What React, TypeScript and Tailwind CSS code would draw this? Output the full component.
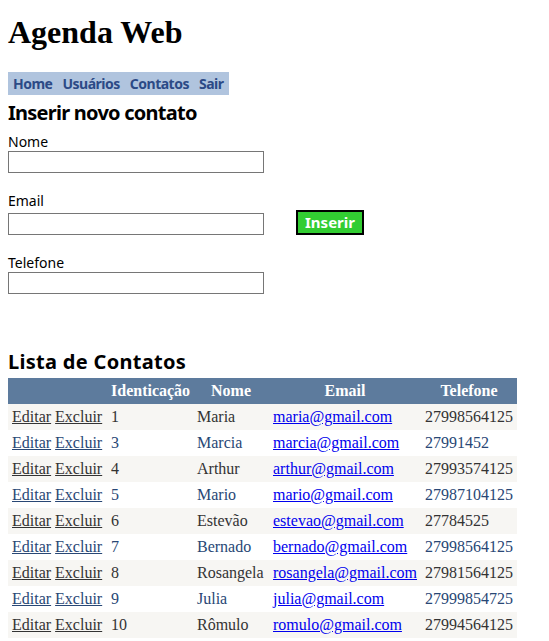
import React from 'react';

type Contato = { id: number; nome: string; email: string; telefone: string };

const contatos: Contato[] = [
  { id: 1, nome: "Maria", email: "maria@gmail.com", telefone: "27998564125" },
  { id: 3, nome: "Marcia", email: "marcia@gmail.com", telefone: "27991452" },
  { id: 4, nome: "Arthur", email: "arthur@gmail.com", telefone: "27993574125" },
  { id: 5, nome: "Mario", email: "mario@gmail.com", telefone: "27987104125" },
  { id: 6, nome: "Estevão", email: "estevao@gmail.com", telefone: "27784525" },
  { id: 7, nome: "Bernado", email: "bernado@gmail.com", telefone: "27998564125" },
  { id: 8, nome: "Rosangela", email: "rosangela@gmail.com", telefone: "27981564125" },
  { id: 9, nome: "Julia", email: "julia@gmail.com", telefone: "27999854725" },
  { id: 10, nome: "Rômulo", email: "romulo@gmail.com", telefone: "27994564125" },
];

const sans = "font-['Segoe_UI','Noto_Sans',sans-serif]";

const Label: React.FC<{ text: string }> = ({ text }) => (
  <div className="text-[14px] leading-[18px] text-black">{text}</div>
);

const Input: React.FC = () => (
  <input type="text" className="block w-[256px] h-[22px] border border-[#767676] bg-white" />
);

export default function App() {
  return (
    <div className="px-2 bg-white min-h-[641px] font-['Liberation_Serif',serif] text-black">
      <h1 className="pt-[14px] text-[32px] leading-[37px] font-bold">Agenda Web</h1>

      {/* Menu */}
      <nav className={`mt-[21px] inline-flex gap-[10px] bg-[#b0c4de] px-[5px] h-[23px] items-center ${sans}`}>
        {["Home", "Usuários", "Contatos", "Sair"].map(item => (
          <a key={item} href="#" className="text-[14px] font-bold tracking-[-0.5px] text-[#2c4a86]">{item}</a>
        ))}
      </nav>

      {/* Formulário */}
      <div className={sans}>
        <h2 className="mt-[4px] text-[20px] leading-[26px] font-bold tracking-[-0.75px]">Inserir novo contato</h2>
        <div className="mt-[7px]">
          <Label text="Nome" />
          <Input />

          <div className="mt-[19px]">
            <Label text="Email" />
            <div className="flex items-end gap-[32px] h-[25px]">
              <Input />
              <button className="w-[68px] h-[25px] bg-[#32cd32] border-2 border-black text-white font-bold text-[15px] leading-none">
                Inserir
              </button>
            </div>
          </div>

          <div className="mt-[19px]">
            <Label text="Telefone" />
            <Input />
          </div>
        </div>

        <h2 className="mt-[55px] mb-[3px] text-[20px] leading-[26px] font-bold tracking-[0.3px]">Lista de Contatos</h2>
      </div>

      {/* Tabela */}
      <table className="table-fixed w-[509px] border-collapse text-[16px] leading-[18px]">
        <colgroup>
          <col className="w-[99px]" />
          <col className="w-[86px]" />
          <col className="w-[76px]" />
          <col className="w-[152px]" />
          <col className="w-[96px]" />
        </colgroup>
        <thead>
          <tr className="bg-[#5d7b9d] text-white font-bold">
            <th className="p-1"></th>
            <th className="p-1 whitespace-nowrap">Identicação</th>
            <th className="p-1">Nome</th>
            <th className="p-1">Email</th>
            <th className="p-1">Telefone</th>
          </tr>
        </thead>
        <tbody>
          {contatos.map((c, i) => (
            <tr key={c.id} className={i % 2 === 0 ? "bg-[#f7f6f3] text-[#333333]" : "bg-white text-[#284775]"}>
              <td className="p-1 whitespace-nowrap">
                <a href="#" className="underline">Editar</a>{" "}
                <a href="#" className="underline">Excluir</a>
              </td>
              <td className="p-1">{c.id}</td>
              <td className="p-1 whitespace-nowrap">{c.nome}</td>
              <td className="p-1 whitespace-nowrap">
                <a href="#" className="underline text-[#0000ee]">{c.email}</a>
              </td>
              <td className="p-1">{c.telefone}</td>
            </tr>
          ))}
        </tbody>
      </table>
    </div>
  );
}
